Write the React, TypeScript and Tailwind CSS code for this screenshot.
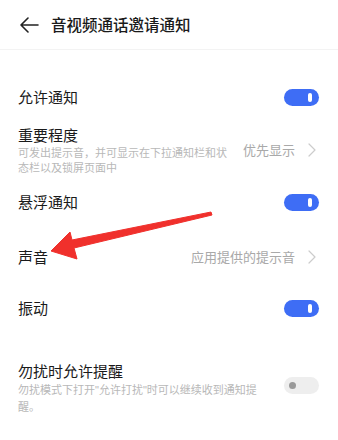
import React from "react";

const font = { fontFamily: '"Noto Sans CJK SC", "Noto Sans", sans-serif' };
const latin = { fontFamily: '"Liberation Sans", sans-serif' };

function Toggle({ on }: { on: boolean }) {
  if (on) {
    return (
      <div className="w-[35px] h-[17px] rounded-full bg-[#3e6df5] flex items-center justify-end pr-[7px] shrink-0">
        <div className="w-[4px] h-[9px] rounded-full bg-white" />
      </div>
    );
  }
  return (
    <div className="w-[35px] h-[17px] rounded-full bg-[#eeeeee] flex items-center pl-[5px] shrink-0">
      <div className="w-[7px] h-[7px] rounded-full bg-[#9a9a9a]" />
    </div>
  );
}

function Chevron() {
  return (
    <svg width="8" height="14" viewBox="0 0 8 14" className="shrink-0">
      <path d="M1 1 L7 7 L1 13" fill="none" stroke="#cccccc" strokeWidth="1.2" strokeLinecap="round" strokeLinejoin="round" />
    </svg>
  );
}

export default function App() {
  return (
    <div className="relative w-[338px] h-[440px] bg-white overflow-hidden" style={font}>
      {/* Header */}
      <div className="h-[50px] flex items-center border-b border-[#f3f3f3]">
        <svg width="20" height="16" viewBox="0 0 20 16" className="ml-[19px]">
          <path d="M9 1 L2 8 L9 15 M2 8 H19" fill="none" stroke="#222" strokeWidth="1.6" strokeLinecap="round" strokeLinejoin="round" />
        </svg>
        <span className="ml-[12px] text-[15.5px] font-medium text-[#1a1a1a] leading-none">音视频通话邀请通知</span>
      </div>

      <div className="px-[18px]">
        {/* 允许通知 */}
        <div className="mt-[23px] h-[48px] flex items-center justify-between">
          <span className="text-[15px] text-[#1a1a1a]">允许通知</span>
          <div className="mr-[1px]"><Toggle on /></div>
        </div>

        {/* 重要程度 */}
        <div className="mt-[4px] flex items-center">
          <div className="flex-1">
            <div className="text-[15px] leading-[20px] text-[#1a1a1a]">重要程度</div>
            <div className="text-[11px] leading-[15px] text-[#b8b8b8] w-[214px]">可发出提示音，并可显示在下拉通知栏和状态栏以及锁屏页面中</div>
          </div>
          <span className="text-[13px] text-[#a9a9a9] mr-[13px]">优先显示</span>
          <div className="mr-[4px]"><Chevron /></div>
        </div>

        {/* 悬浮通知 */}
        <div className="mt-[3px] h-[48px] flex items-center justify-between">
          <span className="text-[15px] text-[#1a1a1a]">悬浮通知</span>
          <div className="mr-[1px]"><Toggle on /></div>
        </div>

        {/* 声音 */}
        <div className="mt-[7px] h-[48px] flex items-center">
          <span className="flex-1 text-[15px] text-[#1a1a1a]">声音</span>
          <span className="text-[13px] text-[#a9a9a9] mr-[13px]">应用提供的提示音</span>
          <div className="mr-[4px]"><Chevron /></div>
        </div>

        {/* 振动 */}
        <div className="mt-[3px] h-[48px] flex items-center justify-between">
          <span className="text-[15px] text-[#1a1a1a]">振动</span>
          <div className="mr-[1px]"><Toggle on /></div>
        </div>

        {/* 勿扰时允许提醒 */}
        <div className="mt-[29px] flex items-center">
          <div className="flex-1">
            <div className="text-[15px] leading-[20px] text-[#1a1a1a]">勿扰时允许提醒</div>
            <div className="text-[11px] leading-[16px] text-[#b8b8b8] w-[250px]">
              勿扰模式下打开<span style={latin}>"</span>允许打扰<span style={latin}>"</span>时可以继续收到通知提醒。
            </div>
          </div>
          <div className="mr-[1px] mt-[-4px]"><Toggle on={false} /></div>
        </div>
      </div>

      {/* Red annotation arrow */}
      <svg className="absolute left-0 top-0 pointer-events-none" width="338" height="440" viewBox="0 0 338 440">
        <path
          d="M211 212 L72 240 L70 232 L51 251 L77 259 L74 248 L212 215 Z"
          fill="#f0302c"
          stroke="#f0302c"
          strokeWidth="1"
          strokeLinejoin="round"
        />
      </svg>
    </div>
  );
}
